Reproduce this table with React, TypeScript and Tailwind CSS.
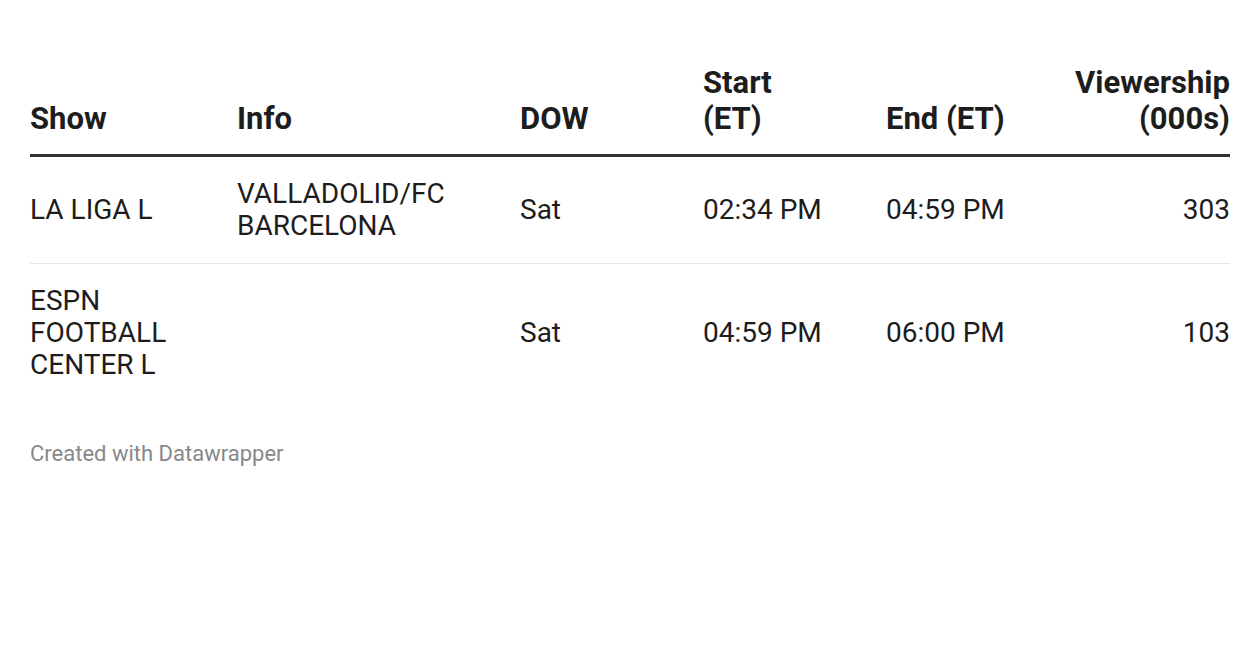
import React from "react";

const font = { fontFamily: "Roboto, 'Liberation Sans', sans-serif" };
const cols = "grid grid-cols-[207px_283px_183px_183px_1fr_auto]";

export default function App() {
  return (
    <div className="min-h-[660px] w-[1260px] bg-white px-[30px] pt-[65px] text-[#1d1d1d]" style={font}>
      <div className={`${cols} items-end border-b-[3px] border-[#333333] pb-[17px] text-[31px] font-bold leading-[36px]`}>
        <div>Show</div>
        <div>Info</div>
        <div>DOW</div>
        <div>Start<br />(ET)</div>
        <div>End (ET)</div>
        <div className="text-right">Viewership<br />(000s)</div>
      </div>
      <div className={`${cols} items-center border-b border-[#e6e6e6] py-[21px] text-[28px] leading-[32px]`}>
        <div>LA LIGA L</div>
        <div>VALLADOLID/FC<br />BARCELONA</div>
        <div>Sat</div>
        <div>02:34 PM</div>
        <div>04:59 PM</div>
        <div className="text-right">303</div>
      </div>
      <div className={`${cols} items-center py-[21px] text-[28px] leading-[32px]`}>
        <div>ESPN<br />FOOTBALL<br />CENTER L</div>
        <div></div>
        <div>Sat</div>
        <div>04:59 PM</div>
        <div>06:00 PM</div>
        <div className="text-right">103</div>
      </div>
      <div className="pt-[39px] text-[22px] leading-[26px] text-[#888888]">Created with Datawrapper</div>
    </div>
  );
}
